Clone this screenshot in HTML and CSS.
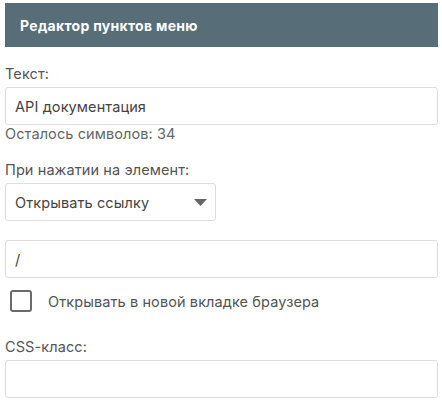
FILE: index.html
```html
<!DOCTYPE html>
<html lang="ru">
<head>
<meta charset="utf-8">
<link rel="stylesheet" href="styles.css">
</head>
<body>
<div class="panel">
  <div class="panel-header">Редактор пунктов меню</div>
  <div class="field field-text">
    <label class="label">Текст:</label>
    <div class="input">API документация</div>
    <div class="hint">Осталось символов: 34</div>
  </div>
  <div class="field field-action">
    <label class="label">При нажатии на элемент:</label>
    <div class="select">
      <span>Открывать ссылку</span>
      <svg class="caret" width="13" height="7" viewBox="0 0 13 7"><path d="M0 0H13L6.5 7Z" fill="#666"/></svg>
    </div>
  </div>
  <div class="field field-url">
    <div class="input">/</div>
  </div>
  <div class="check-row">
    <span class="checkbox"></span>
    <span class="check-label">Открывать в новой вкладке браузера</span>
  </div>
  <div class="field field-css">
    <label class="label">CSS-класс:</label>
    <div class="input"></div>
  </div>
</div>
</body>
</html>
```
FILE: styles.css
```css
* { box-sizing: border-box; }
html, body { margin: 0; padding: 0; background: #fff; }
body {
  font-family: Inter, "Open Sans", "Liberation Sans", sans-serif;
  font-size: 14.5px;
  letter-spacing: 0.1px;
  color: #555;
}
.panel {
  padding: 3px 4px 0 5px;
  width: 442px;
}
.panel-header {
  height: 44px;
  background: #576d78;
  color: #fff;
  font-weight: 700;
  font-size: 14px;
  letter-spacing: 0.3px;
  padding-left: 15px;
  display: flex;
  align-items: center;
}
.label {
  display: block;
  line-height: 20px;
  margin-bottom: 3px;
  color: #555;
}
.input, .select {
  height: 38px;
  border: 1px solid #ddd;
  border-radius: 3px;
  padding: 0 9px;
  display: flex;
  align-items: center;
  color: #444;
}
.field-text { margin-top: 17px; }
.hint { line-height: 17px; color: #666; }
.field-action { margin-top: 18px; }
.select {
  width: 211px;
  justify-content: space-between;
  padding-right: 8px;
}
.field-url { margin-top: 19px; }
.check-row {
  margin-top: 12px;
  display: flex;
  align-items: center;
  height: 22px;
  padding-left: 5px;
}
.checkbox {
  width: 22px;
  height: 22px;
  border: 2px solid #6b6b6b;
  border-radius: 3px;
  margin-right: 16px;
}
.check-label { color: #555; }
.field-css { margin-top: 25px; }
```
